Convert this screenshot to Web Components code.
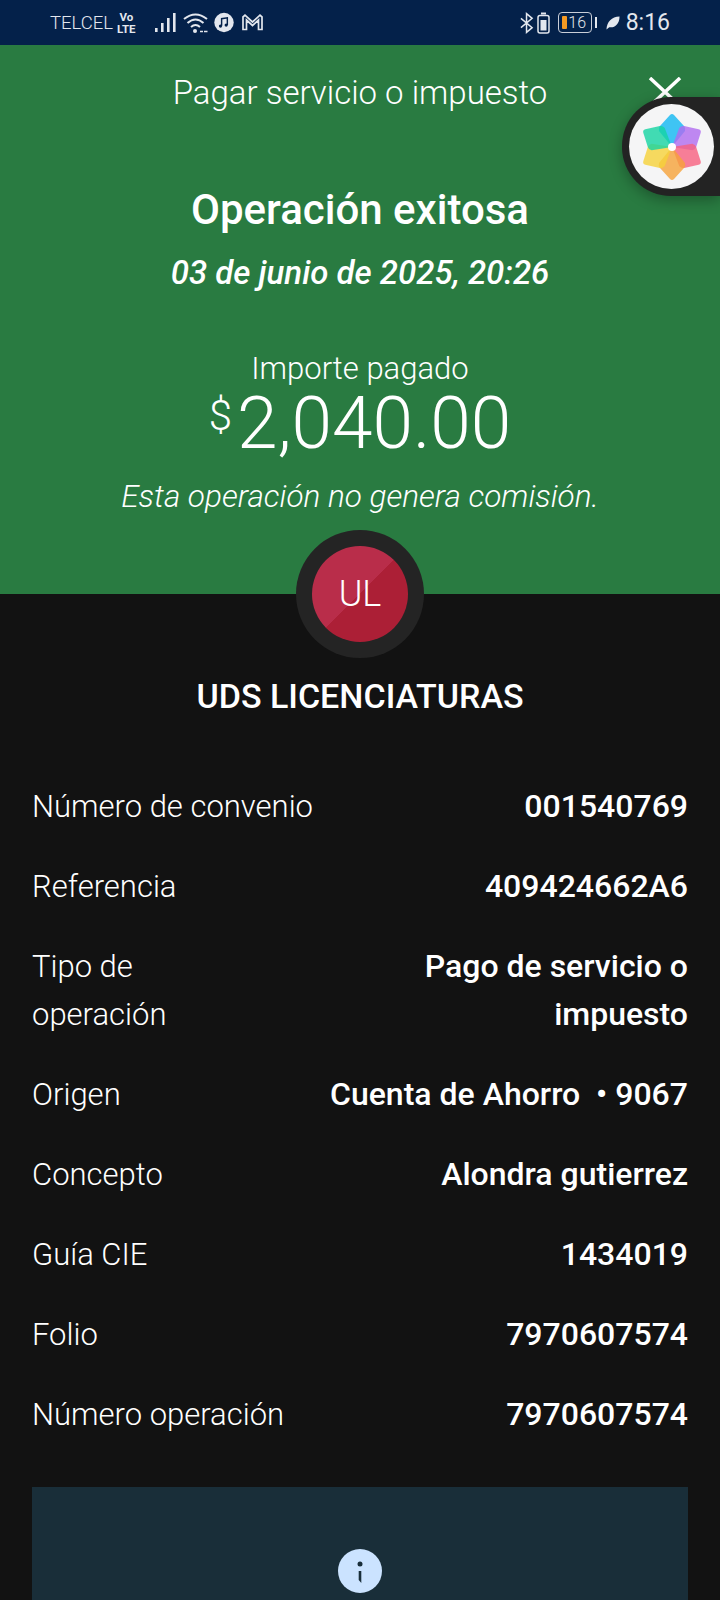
<!DOCTYPE html>
<html>

<head>
  <title>Pagar servicio o impuesto</title>
  <style>
    html, body { margin: 0; padding: 0; background: #121212; }
    body { width: 720px; height: 1600px; overflow: hidden; position: relative; font-family: "Roboto", "Liberation Sans", sans-serif; }
  </style>
</head>

<body>
  <status-bar></status-bar>
  <success-header></success-header>
  <avatar-badge initials="UL"></avatar-badge>
  <detail-list>
    <detail-row label="Número de convenio">001540769</detail-row>
    <detail-row label="Referencia">409424662A6</detail-row>
    <detail-row label="Tipo de operación" wrap>Pago de servicio o impuesto</detail-row>
    <detail-row label="Origen">Cuenta de Ahorro &nbsp;• 9067</detail-row>
    <detail-row label="Concepto">Alondra gutierrez</detail-row>
    <detail-row label="Guía CIE">1434019</detail-row>
    <detail-row label="Folio">7970607574</detail-row>
    <detail-row label="Número operación">7970607574</detail-row>
  </detail-list>
  <info-panel></info-panel>
  <floating-ball></floating-ball>

  <script>
    class StatusBar extends HTMLElement {
      constructor() {
        super();
        this.attachShadow({ mode: 'open' });
        this.shadowRoot.innerHTML = `<style>
          :host { display: flex; align-items: center; justify-content: space-between; height: 45px; background: #04214a; color: #e3e7ee; padding: 0 50px; box-sizing: border-box; font-family: "Roboto", sans-serif; }
          .side { display: flex; align-items: center; }
          .carrier { font-size: 18.5px; font-weight: 300; }
          .volte { font-size: 11.5px; font-weight: 700; line-height: 12px; text-align: center; margin: 0 19px 0 4px; }
          .time { font-size: 23px; margin-left: 6px; }
          svg { display: block; }
        </style>
        <div class="side">
          <span class="carrier">TELCEL</span>
          <span class="volte">Vo<br>LTE</span>
          <svg width="21" height="21" viewBox="0 0 21 21" fill="#e3e7ee"><rect x="0" y="16" width="2.6" height="4"/><rect x="6" y="11" width="2.6" height="9"/><rect x="12" y="6" width="2.6" height="14"/><rect x="18" y="1" width="2.6" height="19"/></svg>
          <svg style="margin-left:7px" width="25" height="22" viewBox="0 0 25 22" fill="none" stroke="#e3e7ee" stroke-width="2"><path d="M1 7Q12.500-2 24 7"/><path d="M4.500 11Q12.500 4 20.500 11"/><path d="M8 15Q12.500 11 17 15"/><circle cx="12" cy="19" r="2" fill="#e3e7ee" stroke="none"/><path d="M17 19.500h3M21 19.500h3.500" stroke-width="1.500"/></svg>
          <svg style="margin-left:6px" width="20" height="21" viewBox="0 0 21 21"><circle cx="10.500" cy="10.500" r="10.200" fill="#e3e7ee"/><path d="M8 14V6.500l6-1V13" fill="none" stroke="#04214a" stroke-width="1.500"/><circle cx="6.800" cy="14.200" r="1.700" fill="#04214a"/><circle cx="12.800" cy="13.200" r="1.700" fill="#04214a"/></svg>
          <svg style="margin-left:8px" width="21" height="17" viewBox="0 0 21 17" fill="none" stroke="#e3e7ee" stroke-width="1.700"><path d="M1 15.500V3L3 1.200 10.500 8 18 1.200 20 3V15.500H16.500V6L10.500 11.500 4.500 6V15.500Z"/></svg>
        </div>
        <div class="side">
          <svg width="14" height="24" viewBox="0 0 15 24" fill="none" stroke="#e3e7ee" stroke-width="1.600"><path d="M1 7l12 10-6 5V2l6 5L1 17"/></svg>
          <svg style="margin-left:3px" width="13" height="22" viewBox="0 0 13 22" fill="none"><rect x="4" y="0.500" width="5" height="2" fill="#e3e7ee"/><rect x="1" y="3.500" width="11" height="17.500" rx="2" stroke="#e3e7ee" stroke-width="1.500"/><rect x="3.500" y="8" width="6" height="10.500" fill="#e3e7ee"/></svg>
          <span style="display:flex;align-items:center;margin-left:8px;width:32px;height:19px;border:1.500px solid #c9ced8;border-radius:4px;font-size:16px;font-weight:300;position:relative;justify-content:center"><span style="position:absolute;left:3px;top:3px;width:5px;height:13px;background:#f59a23;border-radius:1px"></span><span style="margin-left:5px;line-height:18px">16</span></span>
          <span style="width:2px;height:11px;background:#e3e7ee;margin:0 9px 0 3px"></span>
          <svg width="14" height="14" viewBox="0 0 15 15" fill="#e3e7ee"><path d="M0.500 14.500C1 6 6 1 14.500 0.500 14.500 9 9 13 3.500 12Z"/></svg>
          <span class="time">8:16</span>
        </div>`;
      }
    }

    class SuccessHeader extends HTMLElement {
      constructor() {
        super();
        this.attachShadow({ mode: 'open' });
        this.shadowRoot.innerHTML = `<style>
          :host { display: block; height: 549px; background: #297b41; color: #fff; text-align: center; box-sizing: border-box; position: relative; font-family: "Roboto", sans-serif; }
          .title { font-size: 33px; font-weight: 300; line-height: 40px; padding-top: 28px; }
          .close { position: absolute; left: 648px; top: 32px; }
          h1 { font-size: 42px; font-weight: 500; line-height: 48px; margin: 73px 0 0; }
          .date { font-size: 33px; font-weight: 500; font-style: italic; line-height: 40px; margin-top: 19px; }
          .label { font-size: 31px; font-weight: 300; line-height: 36px; margin-top: 58px; }
          .amount { display: flex; justify-content: center; font-weight: 300; font-size: 73px; line-height: 72px; margin-top: 0; }
          .amount sup { font-size: 42px; line-height: 46px; margin: 6px 5px 0 0; }
          .note { font-size: 31.5px; font-weight: 300; font-style: italic; line-height: 38px; margin-top: 19px; }
        </style>
        <div class="title">Pagar servicio o impuesto</div>
        <svg class="close" width="34" height="30" viewBox="0 0 34 30" fill="none" stroke="#fff" stroke-width="3.500"><path d="M2 1l30 28M32 1L2 29"/></svg>
        <h1>Operación exitosa</h1>
        <div class="date">03 de junio de 2025, 20:26</div>
        <div class="label">Importe pagado</div>
        <div class="amount"><sup>$</sup><span>2,040.00</span></div>
        <div class="note">Esta operación no genera comisión.</div>`;
      }
    }

    class AvatarBadge extends HTMLElement {
      constructor() {
        super();
        this.attachShadow({ mode: 'open' });
        this.shadowRoot.innerHTML = `<style>
          :host { display: block; height: 214px; margin-top: -64px; position: relative; font-family: "Roboto", sans-serif; color: #fff; text-align: center; }
          .ring { width: 128px; height: 128px; margin: 0 auto; border-radius: 50%; background: #242424; display: flex; align-items: center; justify-content: center; }
          .face { width: 96px; height: 96px; border-radius: 50%; background: linear-gradient(135deg, #b92d4a 50%, #ac1f36 50%); display: flex; align-items: center; justify-content: center; font-size: 36px; font-weight: 300; }
          .name { font-size: 34px; font-weight: 500; line-height: 40px; margin-top: 18px; }
        </style>
        <div class="ring"><div class="face"></div></div>
        <div class="name">UDS LICENCIATURAS</div>`;
        this.shadowRoot.querySelector('.face').textContent = this.getAttribute('initials');
      }
    }

    class DetailList extends HTMLElement {
      constructor() {
        super();
        this.attachShadow({ mode: 'open' });
        this.shadowRoot.innerHTML = `<style>
          :host { display: flex; flex-direction: column; gap: 33px; padding: 39px 32px 0; font-family: "Roboto", sans-serif; }
        </style><slot></slot>`;
      }
    }

    class DetailRow extends HTMLElement {
      constructor() {
        super();
        this.attachShadow({ mode: 'open' });
        this.shadowRoot.innerHTML = `<style>
          :host { display: flex; justify-content: space-between; color: #fff; font-size: 31px; line-height: 47px; }
          :host([wrap]) { line-height: 47.5px; }
          .label { font-weight: 300; white-space: nowrap; }
          :host([wrap]) .label { white-space: normal; width: 170px; }
          .value { font-weight: 500; font-size: 32px; text-align: right; }
          :host([wrap]) .value { width: 290px; }
        </style>
        <div class="label"></div>
        <div class="value"><slot></slot></div>`;
        this.shadowRoot.querySelector('.label').textContent = this.getAttribute('label');
      }
    }

    class InfoPanel extends HTMLElement {
      constructor() {
        super();
        this.attachShadow({ mode: 'open' });
        this.shadowRoot.innerHTML = `<style>
          :host { display: block; margin: 49px 32px 0; height: 113px; background: #192e39; padding-top: 62px; box-sizing: border-box; }
          svg { display: block; margin: 0 auto; }
        </style>
        <svg width="44" height="44" viewBox="0 0 44 44"><circle cx="22" cy="22" r="22" fill="#cbe3ff"/><circle cx="22" cy="15" r="2.500" fill="#192e39"/><path d="M20.700 22h2.600v12l-2.600-3z" fill="#192e39"/></svg>`;
      }
    }

    class FloatingBall extends HTMLElement {
      constructor() {
        super();
        this.attachShadow({ mode: 'open' });
        const colors = ['#12b8f2', '#b06cf0', '#f7607f', '#f6a23a', '#f6d23a', '#14d5a2'];
        const petals = colors.map((c, i) => `<path d="M0 0L-13-16Q-14-19-12-21L-2-32Q0-34 2-32L12-21Q14-19 13-16Z" fill="${c}" fill-opacity=".8" transform="rotate(${i * 60})"/>`).join('');
        this.shadowRoot.innerHTML = `<style>
          :host { display: block; position: absolute; left: 622px; top: 97px; width: 98px; height: 99px; background: #232323; border-radius: 49px 0 0 49px; box-shadow: 0 4px 14px rgba(0,0,0,.3); }
          .disc { position: absolute; left: 7px; top: 7px; width: 85px; height: 85px; border-radius: 50%; background: #f5f5f6; display: flex; align-items: center; justify-content: center; }
        </style>
        <div class="disc"><svg width="70" height="70" viewBox="-35 -35 70 70">${petals}<circle r="4" fill="#fff"/></svg></div>`;
      }
    }

    customElements.define('status-bar', StatusBar);
    customElements.define('success-header', SuccessHeader);
    customElements.define('avatar-badge', AvatarBadge);
    customElements.define('detail-list', DetailList);
    customElements.define('detail-row', DetailRow);
    customElements.define('info-panel', InfoPanel);
    customElements.define('floating-ball', FloatingBall);
  </script>
</body>

</html>
